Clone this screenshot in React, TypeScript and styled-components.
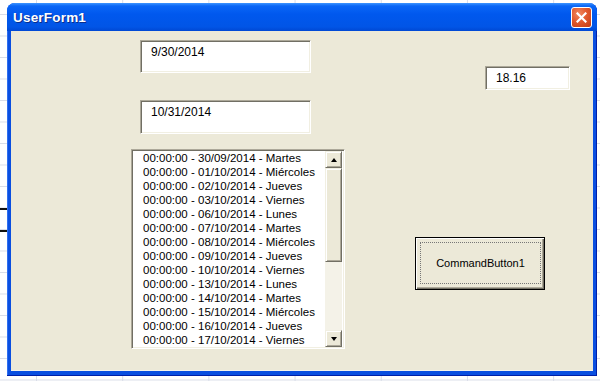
import { FC } from 'react';
import styled, { createGlobalStyle } from 'styled-components';

const GlobalStyle = createGlobalStyle`
  html, body {
    margin: 0;
    padding: 0;
  }

  body {
    width: 600px;
    height: 381px;
    overflow: hidden;
    font-family: 'Liberation Sans', Arial, sans-serif;
    background-color: #ffffff;
    background-image:
      linear-gradient(#111, #111),
      linear-gradient(#111, #111),
      linear-gradient(to bottom, #d9dde8 1px, transparent 1px),
      linear-gradient(to right, #d9dde8 1px, transparent 1px);
    background-repeat: no-repeat, no-repeat, repeat, repeat;
    background-size: 7px 2px, 7px 2px, 100% 21.5px, 86.2px 100%;
    background-position: 0 208px, 0 230px, 0 14px, 36px 0;
  }
`;

const Window = styled.div`
  margin: 3px 0 0 7px;
  width: 590px;
  height: 373px;
  display: flex;
  flex-direction: column;
  background: #0a4fe0;
  border-radius: 8px 8px 0 0;
  box-shadow: inset -1px -1px #0020a8, inset 1px 0 #2f6ff0;
  overflow: hidden;
`;

const TitleBar = styled.div`
  height: 28px;
  flex: none;
  display: flex;
  align-items: center;
  justify-content: space-between;
  padding: 0 5px 0 6px;
  background: linear-gradient(
    to bottom,
    #3d95ff 0,
    #0a66f6 3px,
    #0058ee 40%,
    #0155e6 85%,
    #0048d4 100%
  );
`;

const Title = styled.span`
  color: #ffffff;
  font-weight: bold;
  font-size: 13.5px;
  letter-spacing: 0.2px;
  text-shadow: 1px 1px #0b2d8c;
`;

const CloseButton = styled.div`
  width: 19px;
  height: 19px;
  margin-top: 1px;
  border: 1px solid #ffffff;
  border-radius: 3px;
  background: radial-gradient(circle at 35% 30%, #f08a62 0, #e25a2e 45%, #c13a12 100%);
  display: flex;
  align-items: center;
  justify-content: center;
`;

const FormBody = styled.div`
  flex: 1;
  margin: 0 4px 5px 4px;
  background: #ece9d8;
  display: flex;
  padding: 9px 0 0 120px;
  gap: 70px;
  box-shadow: inset 0 -1px #f6f4ea;
`;

const LeftColumn = styled.div`
  display: flex;
  flex-direction: column;
`;

const RightColumn = styled.div`
  display: flex;
  flex-direction: column;
  align-items: flex-start;
  padding-top: 26px;
`;

const TextBox = styled.div<{ $w: number; $h: number; $pad: number }>`
  box-sizing: border-box;
  width: ${(p) => p.$w}px;
  height: ${(p) => p.$h}px;
  background: #ffffff;
  border: 1px solid;
  border-color: #aca899 #ffffff #ffffff #aca899;
  box-shadow: inset 1px 1px #716f64, inset -1px -1px #f1efe2;
  padding: ${(p) => p.$pad}px 0 0 10px;
  font-size: 12px;
  line-height: 14px;
  color: #000;
`;

const DateBox = styled(TextBox)`
  margin-left: 9px;
  margin-bottom: 27px;
`;

const ValueBox = styled(TextBox)`
  margin-left: 70px;
`;

const ListBox = styled.div`
  box-sizing: border-box;
  width: 214px;
  height: 200px;
  margin-top: -12px;
  display: flex;
  background: #ffffff;
  border: 1px solid;
  border-color: #aca899 #ffffff #ffffff #aca899;
  box-shadow: inset 1px 1px #716f64, inset -1px -1px #f1efe2;
  padding: 1px 2px 1px 2px;
`;

const Items = styled.div`
  flex: 1;
  padding: 0 0 0 9px;
  overflow: hidden;
`;

const Item = styled.div`
  height: 14px;
  line-height: 14px;
  font-family: 'Liberation Sans Narrow', 'Liberation Sans', Arial, sans-serif;
  font-size: 11.5px;
  color: #000;
  white-space: nowrap;
`;

const ScrollBar = styled.div`
  width: 17px;
  display: flex;
  flex-direction: column;
  background: #f4f2e8;
`;

const Raised = styled.div<{ $h: number }>`
  box-sizing: border-box;
  height: ${(p) => p.$h}px;
  flex: none;
  background: #ece9d8;
  border: 1px solid;
  border-color: #f1efe2 #716f64 #716f64 #f1efe2;
  box-shadow: inset 1px 1px #ffffff, inset -1px -1px #aca899;
  display: flex;
  align-items: center;
  justify-content: center;
`;

const Track = styled.div`
  flex: 1;
`;

const Arrow = styled.div<{ $up?: boolean }>`
  width: 0;
  height: 0;
  border-left: 3.5px solid transparent;
  border-right: 3.5px solid transparent;
  ${(p) => (p.$up ? 'border-bottom: 4px solid #000;' : 'border-top: 4px solid #000;')}
`;

const CommandButton = styled.div`
  box-sizing: border-box;
  width: 130px;
  height: 53px;
  margin-top: 147px;
  background: #ece9d8;
  border: 1px solid #000;
  box-shadow: inset 1px 1px #ffffff, inset -1px -1px #716f64, inset -2px -2px #aca899;
  padding: 4px 3px 5px 4px;
  display: flex;
`;

const FocusRect = styled.div`
  flex: 1;
  border: 1px dotted #777;
  display: flex;
  align-items: center;
  justify-content: center;
  font-size: 11px;
  color: #000;
`;

const items = [
  '00:00:00 - 30/09/2014 - Martes',
  '00:00:00 - 01/10/2014 - Miércoles',
  '00:00:00 - 02/10/2014 - Jueves',
  '00:00:00 - 03/10/2014 - Viernes',
  '00:00:00 - 06/10/2014 - Lunes',
  '00:00:00 - 07/10/2014 - Martes',
  '00:00:00 - 08/10/2014 - Miércoles',
  '00:00:00 - 09/10/2014 - Jueves',
  '00:00:00 - 10/10/2014 - Viernes',
  '00:00:00 - 13/10/2014 - Lunes',
  '00:00:00 - 14/10/2014 - Martes',
  '00:00:00 - 15/10/2014 - Miércoles',
  '00:00:00 - 16/10/2014 - Jueves',
  '00:00:00 - 17/10/2014 - Viernes',
];

const App: FC = () => {
  return (
    <>
      <GlobalStyle />
      <Window>
        <TitleBar>
          <Title>UserForm1</Title>
          <CloseButton>
            <svg width="11" height="11" viewBox="0 0 11 11">
              <path d="M1.5 1.5 L9.5 9.5 M9.5 1.5 L1.5 9.5" stroke="#fff" strokeWidth="2.2" strokeLinecap="square" />
            </svg>
          </CloseButton>
        </TitleBar>
        <FormBody>
          <LeftColumn>
            <DateBox $w={171} $h={33} $pad={4}>9/30/2014</DateBox>
            <DateBox $w={171} $h={34} $pad={4}>10/31/2014</DateBox>
            <ListBox>
              <Items>
                {items.map((text) => (
                  <Item key={text}>{text}</Item>
                ))}
              </Items>
              <ScrollBar>
                <Raised $h={17}>
                  <Arrow $up />
                </Raised>
                <Raised $h={94} />
                <Track />
                <Raised $h={17}>
                  <Arrow />
                </Raised>
              </ScrollBar>
            </ListBox>
          </LeftColumn>
          <RightColumn>
            <ValueBox $w={85} $h={24} $pad={4}>
              18.16
            </ValueBox>
            <CommandButton>
              <FocusRect>CommandButton1</FocusRect>
            </CommandButton>
          </RightColumn>
        </FormBody>
      </Window>
    </>
  );
};

export default App;
